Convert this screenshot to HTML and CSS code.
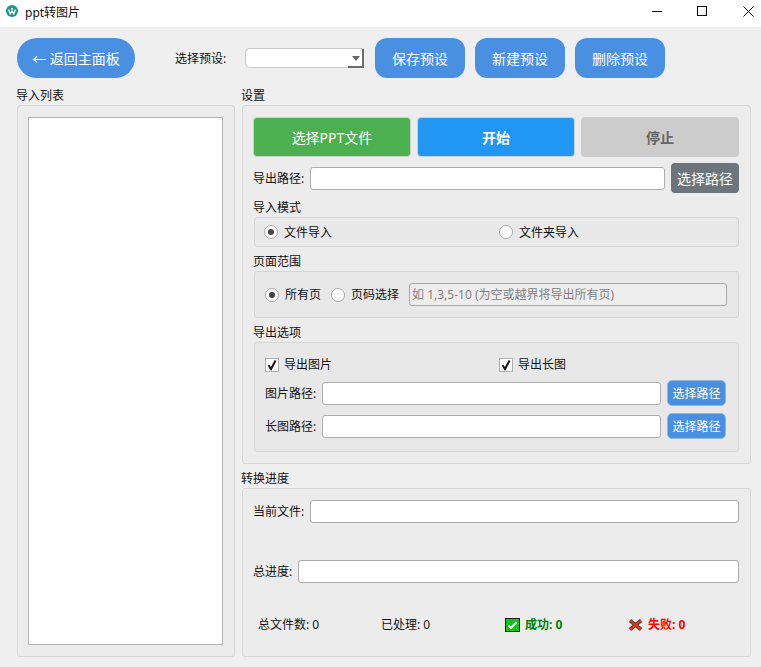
FILE: index.html
```html
<!DOCTYPE html>
<html lang="zh">
<head>
<meta charset="utf-8">
<title>ppt转图片</title>
<link rel="stylesheet" href="styles.css">
</head>
<body>
<header class="titlebar">
  <svg class="logo" width="14" height="14" viewBox="0 0 14 14"><circle cx="7" cy="7" r="6" fill="#1a9a86"/><path d="M3.6 5.5 L5.2 9.8 L7 7 L8.8 9.8 L10.4 5.5" fill="none" stroke="#fff" stroke-width="1.3"/><circle cx="7" cy="4.8" r="1" fill="#fff"/></svg>
  <span class="app-title">ppt转图片</span>
  <div class="win-controls">
    <svg width="46" height="27" viewBox="0 0 46 27"><path d="M29 11.5h10" stroke="#000" fill="none"/></svg>
    <svg width="46" height="27" viewBox="0 0 46 27"><rect x="28.5" y="6.5" width="9" height="9" stroke="#000" fill="none"/></svg>
    <svg width="46" height="27" viewBox="0 0 46 27"><path d="M28.5 6.5l10 10M38.5 6.5l-10 10" stroke="#000" fill="none"/></svg>
  </div>
</header>

<main class="main">
  <div class="toolbar">
    <button class="btn-blue btn-back">← 返回主面板</button>
    <span class="preset-label">选择预设:</span>
    <div class="combo"><span class="combo-btn"><span class="combo-arrow"></span></span></div>
    <button class="btn-blue btn-preset">保存预设</button>
    <button class="btn-blue btn-preset">新建预设</button>
    <button class="btn-blue btn-preset">删除预设</button>
  </div>

  <div class="columns">
    <section class="col-left">
      <h2 class="title title-left">导入列表</h2>
      <div class="group list-group"><div class="list"></div></div>
    </section>

    <section class="col-right">
      <h2 class="title">设置</h2>
      <div class="group settings">
        <div class="action-row">
          <button class="action action-green">选择PPT文件</button>
          <button class="action action-blue">开始</button>
          <button class="action action-grey">停止</button>
        </div>
        <div class="path-row">
          <label class="lbl">导出路径:</label>
          <div class="input grow"></div>
          <button class="btn-dark">选择路径</button>
        </div>

        <h3 class="subtitle sub-mode">导入模式</h3>
        <div class="subgroup mode">
          <div class="two-col">
            <span class="opt"><i class="radio on"></i>文件导入</span>
            <span class="opt"><i class="radio"></i>文件夹导入</span>
          </div>
        </div>

        <h3 class="subtitle sub-range">页面范围</h3>
        <div class="subgroup range">
          <span class="opt"><i class="radio on"></i>所有页</span>
          <span class="opt"><i class="radio"></i>页码选择</span>
          <div class="input input-off grow">如 1,3,5-10 (为空或越界将导出所有页)</div>
        </div>

        <h3 class="subtitle sub-export">导出选项</h3>
        <div class="subgroup export">
          <div class="two-col checks">
            <span class="opt"><i class="check"><svg width="12" height="12" viewBox="0 0 12 12"><path d="M2.6 6.2L5 10 9.6 1.6" fill="none" stroke="#111" stroke-width="2"/></svg></i>导出图片</span>
            <span class="opt"><i class="check"><svg width="12" height="12" viewBox="0 0 12 12"><path d="M2.6 6.2L5 10 9.6 1.6" fill="none" stroke="#111" stroke-width="2"/></svg></i>导出长图</span>
          </div>
          <div class="file-row">
            <label class="lbl">图片路径:</label>
            <div class="input grow"></div>
            <button class="btn-small">选择路径</button>
          </div>
          <div class="file-row">
            <label class="lbl">长图路径:</label>
            <div class="input grow"></div>
            <button class="btn-small">选择路径</button>
          </div>
        </div>
      </div>

      <h2 class="title title-progress">转换进度</h2>
      <div class="group progress">
        <div class="progress-row">
          <label class="lbl">当前文件:</label>
          <div class="input grow"></div>
        </div>
        <div class="progress-row row-total">
          <label class="lbl">总进度:</label>
          <div class="input grow"></div>
        </div>
        <div class="stats">
          <span>总文件数: 0</span>
          <span>已处理: 0</span>
          <span class="stat-ok"><svg width="15" height="14" viewBox="0 0 15 14"><rect x="0.5" y="0.5" width="14" height="13" fill="#16c01c" stroke="#222"/><path d="M3.5 7.5l2.6 2.4 5.4-5.6" fill="none" stroke="#fff" stroke-width="2"/></svg>成功: 0</span>
          <span class="stat-fail"><svg width="15" height="12" viewBox="0 0 15 12"><path d="M2 1.5l11 9M13 1.5l-11 9" fill="none" stroke="#444" stroke-width="3.8"/><path d="M2 1.5l11 9M13 1.5l-11 9" fill="none" stroke="#e8321a" stroke-width="2.2"/></svg>失败: 0</span>
        </div>
      </div>
    </section>
  </div>
</main>
</body>
</html>
```
FILE: styles.css
```css
* { box-sizing: border-box; }
html, body { margin: 0; padding: 0; }
body {
  width: 761px;
  height: 667px;
  overflow: hidden;
  background: #efefef;
  color: #111;
  font: 12px/17px "Noto Sans", "Noto Sans CJK SC", sans-serif;
}
button { font: inherit; border: 0; padding: 0; color: #fff; }
.titlebar {
  height: 27px;
  background: #fff;
  display: flex;
  align-items: center;
  padding-left: 5px;
}
.logo { margin-right: 6px; margin-top: -5px; }
.app-title { margin-top: -3px; }
.win-controls { margin-left: auto; display: flex; }
.main { padding: 11px 10px 0 17px; }
.toolbar { display: flex; align-items: center; height: 40px; }
.btn-blue { background: #4a90e2; height: 40px; font-size: 14px; }
.btn-back { width: 118px; border-radius: 20px; }
.preset-label { margin-left: 40px; width: 70px; }
.combo {
  width: 119px; height: 20px; background: #fff;
  border: 1px solid #c8c8c8; border-right: 0;
  border-radius: 5px 0 0 5px;
  position: relative;
  margin-right: 11px;
}
.combo-btn {
  position: absolute; right: 0; top: 0; bottom: -1px; width: 16px;
  background: #fff;
  border-right: 2px solid #6e6e6e; border-bottom: 2px solid #6e6e6e;
}
.combo-arrow {
  position: absolute; right: 2px; top: 7px;
  border-left: 4px solid transparent; border-right: 4px solid transparent; border-top: 5px solid #666;
}
.btn-preset { width: 90px; border-radius: 12px; margin-right: 10px; }
.columns { display: flex; margin-top: 10px; }
.title { margin: 0; font-size: 12px; font-weight: 400; height: 17px; line-height: 15px; }
.title-left { margin-left: -1px; }
.col-left { width: 218px; }
.col-right { width: 509px; margin-left: 7px; }
.col-right > .title { margin-left: -1px; }
.group { background: #ececec; border: 1px solid #d6d6d6; border-radius: 3px; }
.list-group { height: 552px; padding: 11px 11px 11px 10px; }
.list { height: 100%; background: #fff; border: 1px solid #b4b4b4; }
.settings { height: 359px; padding: 11px 11px 0 10px; }
.action-row { display: flex; gap: 6px; }
.action { flex: 0 0 158px; height: 40px; font-size: 14px; border-radius: 4px; }
.action-green { background: #4caf50; border: 1px solid #c9d4c9; }
.action-blue { background: #2196f3; font-weight: 700; border: 1px solid #c6d3de; }
.action-grey { background: #cccccc; color: #666; font-weight: 700; }
.path-row { display: flex; align-items: center; margin-top: 6px; height: 30px; }
.lbl { white-space: nowrap; margin-right: 6px; }
.grow { flex: 1 1 auto; }
.input {
  height: 23px; background: #fff;
  border: 1px solid #adadad; border-radius: 3px;
}
.btn-dark { width: 68px; height: 30px; margin-left: 6px; background: #6c757d; font-size: 14px; border-radius: 4px; }
.subtitle { margin: 0; font-size: 12px; font-weight: 400; height: 17px; line-height: 15px; }
.sub-mode { margin-top: 7px; }
.sub-range { margin-top: 7px; }
.sub-export { margin-top: 7px; }
.subgroup { background: #e8e8e8; border: 1px solid #d6d6d6; border-radius: 3px; margin-left: 1px; }
.mode { height: 30px; display: flex; align-items: center; padding-left: 9px; }
.two-col { display: grid; grid-template-columns: 235px 1fr; width: 100%; }
.opt { display: inline-flex; align-items: center; white-space: nowrap; }
.radio {
  width: 14px; height: 14px; border: 1px solid #a8a8a8; border-radius: 50%; background: #fff;
  margin-right: 6px; position: relative;
}
.radio.on::after {
  content: ""; position: absolute; left: 3px; top: 3px; width: 6px; height: 6px;
  border-radius: 50%; background: #444;
}
.range { height: 47px; display: flex; align-items: center; padding: 0 11px 0 10px; gap: 10px; }
.input-off { background: #eeeeee; color: #808080; padding-left: 2px; line-height: 21px; border-color: #a8a8a8; }
.export { height: 110px; padding: 13px 12px 0 10px; }
.check {
  width: 14px; height: 14px; background: #fff; border: 1px solid #b0b0b0; margin-right: 5px;
  display: flex; align-items: center; justify-content: center;
}
.checks { height: 16px; margin-bottom: 8px; grid-template-columns: 234px 1fr; }
.file-row { display: flex; align-items: center; height: 26px; margin-bottom: 7px; }
.file-row .lbl { margin-right: 6px; }
.btn-small { width: 59px; height: 26px; margin-left: 6px; background: #4a90e2; border-radius: 5px; border: 1px solid #8fb7e6; }
.col-right > .title-progress { margin-top: 7px; }
.progress { height: 169px; padding: 11px 11px 0 10px; }
.progress-row { display: flex; align-items: center; }
.progress-row .lbl { margin-right: 6px; }
.row-total { margin-top: 37px; }
.stats {
  display: grid; grid-template-columns: repeat(4, 123px);
  margin-top: 33px; padding-left: 5px; align-items: center;
}
.stats span { display: flex; align-items: center; white-space: nowrap; }
.stats svg { margin-right: 5px; margin-left: 1px; }
.stat-ok { color: #008000; font-weight: 700; }
.stat-fail { color: #ff0000; font-weight: 700; }
```
